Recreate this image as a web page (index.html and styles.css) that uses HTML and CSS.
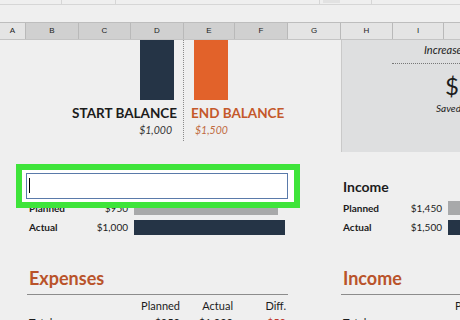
FILE: index.html
```html
<!DOCTYPE html>
<html>
<head>
    <title>Budget Sheet</title>
    <link rel="stylesheet" href="styles.css">
</head>
<body>
    <div class="ribbon">
        <div class="ribbon-cell w62"></div>
        <div class="ribbon-cell w54"></div>
        <div class="ribbon-cell w204"></div>
        <div class="ribbon-cell w52"><span class="ribbon-box"></span></div>
    </div>

    <div class="col-heads">
        <div class="col-head light" style="width: 26px">A</div>
        <div class="col-head" style="width: 53px">B</div>
        <div class="col-head" style="width: 52px">C</div>
        <div class="col-head" style="width: 53px">D</div>
        <div class="col-head" style="width: 51px">E</div>
        <div class="col-head" style="width: 53px">F</div>
        <div class="col-head light" style="width: 53px">G</div>
        <div class="col-head light" style="width: 52px">H</div>
        <div class="col-head light" style="width: 51px">I</div>
        <div class="col-head light rest"></div>
    </div>

    <div class="sheet">
        <div class="balances">
            <div class="balance start">
                <div class="bar-col dark"></div>
                <div class="balance-label">START BALANCE</div>
                <div class="balance-amount">$1,000</div>
            </div>
            <div class="divider"></div>
            <div class="balance end">
                <div class="bar-col orange"></div>
                <div class="balance-label">END BALANCE</div>
                <div class="balance-amount">$1,500</div>
            </div>
        </div>

        <div class="goal">
            <div class="goal-title">Increase in Total Savings</div>
            <div class="goal-rule"></div>
            <div class="goal-amount">$500</div>
            <div class="goal-note">Saved this month</div>
        </div>

        <div class="summary left">
            <div class="summary-title">Expenses</div>
            <div class="summary-row">
                <span class="row-label">Planned</span>
                <span class="row-amount">$950</span>
                <span class="row-bar gray" style="width: 144px"></span>
            </div>
            <div class="summary-row">
                <span class="row-label">Actual</span>
                <span class="row-amount">$1,000</span>
                <span class="row-bar navy" style="width: 151px"></span>
            </div>

            <div class="highlight">
                <div class="cell-input"><span class="caret"></span></div>
            </div>
        </div>

        <div class="summary right">
            <div class="summary-title">Income</div>
            <div class="summary-row">
                <span class="row-label">Planned</span>
                <span class="row-amount">$1,450</span>
                <span class="row-bar gray" style="width: 140px"></span>
            </div>
            <div class="summary-row">
                <span class="row-label">Actual</span>
                <span class="row-amount">$1,500</span>
                <span class="row-bar navy" style="width: 145px"></span>
            </div>
        </div>

        <div class="ledger left">
            <div class="ledger-title">Expenses</div>
            <div class="ledger-row head">
                <span class="ledger-name"></span>
                <span>Planned</span>
                <span>Actual</span>
                <span>Diff.</span>
            </div>
            <div class="ledger-row">
                <span class="ledger-name">Totals</span>
                <span>$950</span>
                <span>$1,000</span>
                <span class="neg">-$50</span>
            </div>
        </div>

        <div class="ledger right">
            <div class="ledger-title">Income</div>
            <div class="ledger-row head">
                <span class="ledger-name"></span>
                <span>Planned</span>
                <span>Actual</span>
            </div>
            <div class="ledger-row">
                <span class="ledger-name">Totals</span>
                <span>$1,450</span>
                <span>$1,500</span>
            </div>
        </div>
    </div>
</body>
</html>
```

FILE: styles.css
```css
body {
    margin: 0;
    width: 460px;
    height: 320px;
    overflow: hidden;
    background-color: #efefef;
    font-family: 'Lato', 'Liberation Sans', sans-serif;
    color: #1c1c1c;
}

/* toolbar strip at the very top */
.ribbon {
    display: flex;
    height: 4px;
    border-bottom: 1px solid #d6d6d6;
    margin-bottom: 17px;
}

.ribbon-cell {
    border-right: 1px solid #d6d6d6;
    position: relative;
}

.w62 { width: 61px; }
.w54 { width: 53px; }
.w204 { width: 203px; }
.w52 { width: 51px; }

.ribbon-box {
    position: absolute;
    left: 3px;
    top: 0;
    width: 17px;
    height: 3px;
    background-color: #e2e2e2;
}

/* column letters */
.col-heads {
    display: flex;
    height: 16px;
    border-top: 1px solid #bdbdbd;
    border-bottom: 1px solid #c4c4c4;
}

.col-head {
    flex: none;
    box-sizing: border-box;
    border-right: 1px solid #b9b9b9;
    background-color: #d0d0d0;
    font-family: 'Liberation Sans', Arial, sans-serif;
    font-size: 8px;
    line-height: 16px;
    text-align: center;
    color: #222;
}

.col-head.light {
    background-color: #e4e4e4;
}

.col-head.rest {
    flex: 1;
    border-right: none;
}

/* sheet body */
.sheet {
    display: grid;
    grid-template-columns: 341px 1fr;
}

.balances {
    display: flex;
    height: 112px;
}

.balance {
    display: flex;
    flex-direction: column;
}

.balance.start {
    width: 183px;
    align-items: flex-end;
}

.balance.end {
    flex: 1;
    align-items: flex-start;
}

.bar-col {
    width: 34px;
    height: 60px;
}

.start .bar-col {
    margin-right: 9px;
}

.end .bar-col {
    margin-left: 9px;
}

.dark { background-color: #253446; }
.orange { background-color: #e2622a; }

.balance-label {
    margin-top: 4px;
    font-size: 13.5px;
    font-weight: 700;
    line-height: 18px;
    white-space: nowrap;
}

.start .balance-label {
    margin-right: 6px;
}

.end .balance-label {
    margin-left: 6px;
    color: #c4582a;
}

.balance-amount {
    margin-top: 1px;
    font-size: 10.5px;
    font-style: italic;
    line-height: 14px;
}

.start .balance-amount {
    margin-right: 11px;
    color: #333;
}

.end .balance-amount {
    margin-left: 10px;
    color: #c06a40;
}

.divider {
    width: 1px;
    height: 101px;
    border-left: 1px dotted #8a8a8a;
}

/* savings panel */
.goal {
    height: 112px;
    border-left: 1px solid #c9c9c9;
    background-color: #dedfe0;
    overflow: hidden;
    white-space: nowrap;
}

.goal-title {
    margin: 3px 0 0 82px;
    font-size: 11px;
    font-style: italic;
    line-height: 14px;
}

.goal-rule {
    margin: 6px 0 0 50px;
    border-top: 1px dotted #777;
}

.goal-amount {
    margin: 8px 0 0 103px;
    font-size: 24px;
    line-height: 28px;
}

.goal-note {
    margin: 2px 0 0 94px;
    font-size: 10px;
    font-style: italic;
    line-height: 13px;
}

/* planned vs actual summaries */
.summary {
    position: relative;
    padding-top: 26px;
    height: 89px;
    overflow: hidden;
    white-space: nowrap;
}

.summary.left {
    padding-left: 29px;
    overflow: visible;
}

.summary.right {
    padding-left: 2px;
}

.summary-title {
    font-size: 14px;
    font-weight: 700;
    line-height: 17px;
    margin-bottom: 6px;
}

.summary-row {
    display: flex;
    align-items: center;
    height: 14px;
    margin-bottom: 5px;
    font-size: 10px;
    line-height: 14px;
}

.row-label {
    flex: none;
    width: 60px;
    font-weight: 700;
}

.row-amount {
    flex: none;
    width: 39px;
    text-align: right;
}

.right .row-label {
    width: 57px;
}

.right .row-amount {
    width: 42px;
}

.row-bar {
    flex: none;
    height: 14px;
    margin-left: 6px;
}

.row-bar.gray { background-color: #a8a9aa; }
.row-bar.navy { background-color: #253446; height: 15px; }

.highlight {
    position: absolute;
    left: 16px;
    top: 12px;
    width: 272px;
    height: 32px;
    border: 6px solid #3ee43a;
    background-color: #fff;
}

.cell-input {
    position: relative;
    margin: 3px 0 0 4px;
    width: 260px;
    height: 24px;
    border: 1px solid #5a7aaa;
}

.caret {
    position: absolute;
    left: 2px;
    top: 4px;
    width: 1px;
    height: 15px;
    background-color: #000;
}

/* bottom tables */
.ledger {
    white-space: nowrap;
    overflow: hidden;
}

.ledger.left {
    padding-left: 27px;
    width: 261px;
}

.ledger-title {
    padding: 0 0 5px 2px;
    border-bottom: 1px solid #8c8c8c;
    font-size: 18px;
    font-weight: 700;
    line-height: 22px;
    color: #b9532a;
}

.ledger-row {
    display: flex;
    font-size: 11px;
    line-height: 14px;
    margin-top: 3px;
}

.ledger-row.head {
    margin-top: 4px;
}

.ledger-row span {
    flex: none;
    width: 53px;
    text-align: right;
}

.ledger-row .ledger-name {
    width: 98px;
    padding-left: 2px;
    text-align: left;
}

.ledger-row .neg {
    color: #c0392b;
}
```
